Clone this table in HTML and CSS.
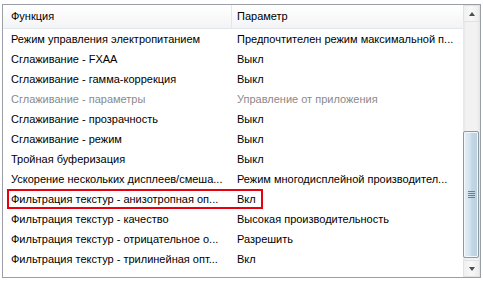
FILE: index.html
```html
<!DOCTYPE html>
<html lang="ru">
<head>
    <meta charset="UTF-8">
    <title>Параметры 3D</title>
    <link rel="stylesheet" href="styles.css">
</head>
<body>
    <div class="listview">
        <div class="table">
            <div class="header">
                <div class="col-name">Функция</div>
                <div class="col-value">Параметр</div>
            </div>
            <div class="rows">
                <div class="row"><div class="col-name">Режим управления электропитанием</div><div class="col-value">Предпочтителен режим максимальной п...</div></div>
                <div class="row"><div class="col-name">Сглаживание - FXAA</div><div class="col-value">Выкл</div></div>
                <div class="row"><div class="col-name">Сглаживание - гамма-коррекция</div><div class="col-value">Выкл</div></div>
                <div class="row disabled"><div class="col-name">Сглаживание - параметры</div><div class="col-value">Управление от приложения</div></div>
                <div class="row"><div class="col-name">Сглаживание - прозрачность</div><div class="col-value">Выкл</div></div>
                <div class="row"><div class="col-name">Сглаживание - режим</div><div class="col-value">Выкл</div></div>
                <div class="row"><div class="col-name">Тройная буферизация</div><div class="col-value">Выкл</div></div>
                <div class="row"><div class="col-name">Ускорение нескольких дисплеев/смеша...</div><div class="col-value">Режим многодисплейной производител...</div></div>
                <div class="row marked"><div class="col-name">Фильтрация текстур - анизотропная оп...</div><div class="col-value">Вкл</div></div>
                <div class="row"><div class="col-name">Фильтрация текстур - качество</div><div class="col-value">Высокая производительность</div></div>
                <div class="row"><div class="col-name">Фильтрация текстур - отрицательное о...</div><div class="col-value">Разрешить</div></div>
                <div class="row"><div class="col-name">Фильтрация текстур - трилинейная опт...</div><div class="col-value">Вкл</div></div>
            </div>
        </div>
        <div class="scrollbar">
            <div class="sb-btn"><span class="arrow up"></span></div>
            <div class="sb-track">
                <div class="sb-thumb"><span class="grip"></span></div>
            </div>
            <div class="sb-btn"><span class="arrow down"></span></div>
        </div>
    </div>
</body>
</html>
```

FILE: styles.css
```css
body {
    margin: 0;
    background: #fff;
    font-family: "Liberation Sans", Arial, sans-serif;
    font-size: 11px;
    color: #000;
}

.listview {
    margin: 4px 0 0 2px;
    width: 477px;
    height: 272px;
    border: 1px solid #9a9ea6;
    display: flex;
    overflow: hidden;
}

.table {
    flex: 1;
    overflow: hidden;
}

.header {
    display: flex;
    height: 23px;
    background: linear-gradient(#fff, #f3f4f6);
    border-bottom: 1px solid #e3e6ea;
}

.header .col-name {
    border-right: 1px solid #e3e6ea;
}

.header > div {
    line-height: 23px;
}

.row {
    display: flex;
    height: 20px;
    line-height: 20px;
    position: relative;
}

.col-name {
    width: 229px;
    padding-left: 8px;
    box-sizing: border-box;
    white-space: nowrap;
    overflow: hidden;
}

.col-value {
    flex: 1;
    padding-left: 5px;
    white-space: nowrap;
    overflow: hidden;
}

.disabled {
    color: #8a8a8a;
}

/* red frame drawn over the highlighted setting */
.marked::after {
    content: "";
    position: absolute;
    left: 4px;
    top: 0;
    width: 256px;
    height: 20px;
    box-sizing: border-box;
    border: 2px solid #e8000e;
}

.scrollbar {
    width: 17px;
    display: flex;
    flex-direction: column;
    background: linear-gradient(90deg, #e6e6e6, #f2f2f2 20%, #f2f2f2 80%, #e6e6e6);
}

.sb-btn {
    height: 17px;
    display: flex;
    align-items: center;
    justify-content: center;
    background: linear-gradient(90deg, #f0f0f0, #f8f8f8 50%, #ececec);
    border: 1px solid #e2e2e2;
    box-sizing: border-box;
}

.arrow {
    width: 0;
    height: 0;
    border-left: 3px solid transparent;
    border-right: 3px solid transparent;
}

.arrow.up {
    border-bottom: 4px solid #4d4d4d;
}

.arrow.down {
    border-top: 4px solid #4d4d4d;
}

.sb-track {
    flex: 1;
    display: flex;
    flex-direction: column;
    justify-content: flex-end;
    padding: 0 0 2px;
}

.sb-thumb {
    height: 125px;
    margin: 0 1px 0 0;
    border: 1px solid #8c9aa6;
    border-radius: 2px;
    background: linear-gradient(90deg, #e4eef6, #d2e2ee 45%, #c2d6e6 55%, #bcd0e0);
    box-shadow: inset 0 0 0 1px #f3f8fb;
    display: flex;
    align-items: center;
    justify-content: center;
}

.grip {
    width: 7px;
    height: 7px;
    background: repeating-linear-gradient(#6e7e8c 0 1px, transparent 1px 2px);
}
```
